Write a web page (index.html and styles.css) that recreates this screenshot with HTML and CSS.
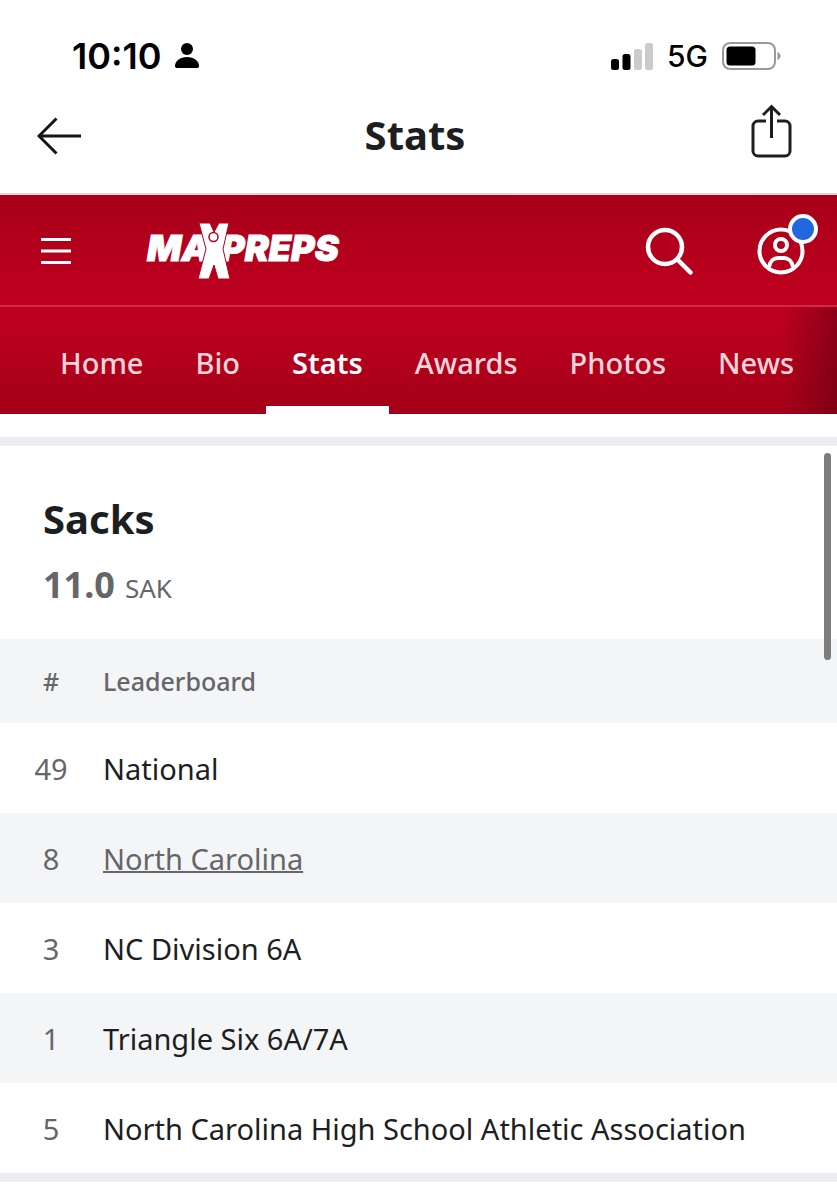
FILE: index.html
```html
<!DOCTYPE html>
<html lang="en">
<head>
<meta charset="utf-8">
<meta name="viewport" content="width=device-width, initial-scale=1">
<title>Stats</title>
<link rel="stylesheet" href="styles.css">
</head>
<body>
<div class="status">
  <div class="status-left">
    <span class="clock">10:10</span>
    <svg width="24" height="28" viewBox="0 0 24 28" aria-hidden="true"><circle cx="12" cy="7" r="6"/><path d="M12 15c7 0 12 4 12 9 0 1.500-.8 2-2.500 2h-19C.8 26 0 25.500 0 24c0-5 5-9 12-9z"/></svg>
  </div>
  <div class="status-right">
    <svg width="42" height="27" viewBox="0 0 42 27" aria-hidden="true"><rect y="16" width="8" height="11" rx="2.500"/><rect x="11.500" y="11" width="8" height="16" rx="2.500"/><g fill="#cbcbcb"><rect x="23" y="6" width="8" height="21" rx="2.500"/><rect x="34" width="8" height="27" rx="2.500"/></g></svg>
    <span class="network">5G</span>
    <svg width="60" height="28" viewBox="0 0 60 28" aria-hidden="true"><rect x="1" y="1" width="52" height="26" rx="7" fill="none" stroke="#999" stroke-width="2"/><rect x="4.500" y="4.500" width="29" height="19" rx="3.500"/><path d="M55.500 10c4 1.500 4 6.500 0 8z" fill="#999"/></svg>
  </div>
</div>
<header class="titlebar">
  <button class="icon-button" aria-label="Back"><svg width="44" height="38" viewBox="0 0 44 38" fill="none" stroke="#151515" stroke-width="3"><path d="M19.500 1.500 2 19l17.500 17.500M2 19h42"/></svg></button>
  <h1 class="title">Stats</h1>
  <button class="icon-button share" aria-label="Share"><svg width="42" height="54" viewBox="0 0 42 54" fill="none" stroke="#1d1e1f" stroke-width="3"><path d="M15 17H7a5 5 0 0 0-5 5v25a5 5 0 0 0 5 5h27a5 5 0 0 0 5-5V22a5 5 0 0 0-5-5h-8M20.500 34V3M12 11l8.500-8.500L29 11"/></svg></button>
</header>
<div class="brandbar">
  <button class="icon-button" aria-label="Menu"><svg width="30" height="28" viewBox="0 0 30 28" stroke="#fff" stroke-width="3"><path d="M0 2.500h30M0 14h30M0 25.500h30"/></svg></button>
  <a class="logo" href="#" aria-label="MaxPreps">
    <span class="wordmark">MA</span>
    <svg class="figure" width="32" height="56" viewBox="0 0 32 56" aria-hidden="true"><path fill="#fff" stroke="#b4001c" stroke-width="1" d="M1 0h11l4 9 5-9h10l-6 26 7 30H20l-4-14-5 14H0l8-30z"/><circle cx="15.500" cy="14" r="4.500" fill="#fff" stroke="#b4001c" stroke-width="1.500"/></svg>
    <span class="wordmark">PREPS</span>
  </a>
  <button class="icon-button" aria-label="Search"><svg width="48" height="48" viewBox="0 0 48 48" fill="none" stroke="#fff" stroke-width="4.500" stroke-linecap="round"><circle cx="20" cy="20" r="17"/><path d="m32.500 32.500 13 13"/></svg></button>
  <button class="icon-button account" aria-label="Account"><svg width="48" height="48" viewBox="0 0 48 48" fill="none" stroke="#fff" stroke-width="4"><circle cx="24" cy="24" r="21.500"/><circle cx="24" cy="18" r="6"/><path d="M12 40c1-6 5-9 9-9h6c4 0 8 3 9 9"/></svg><span class="badge"></span></button>
</div>
<nav class="tabs" aria-label="Athlete">
  <a class="tab" href="#">Home</a>
  <a class="tab" href="#">Bio</a>
  <a class="tab active" href="#" aria-current="page">Stats</a>
  <a class="tab" href="#">Awards</a>
  <a class="tab" href="#">Photos</a>
  <a class="tab" href="#">News</a>
</nav>
<main class="content">
  <div class="scrollbar"></div>
  <section class="stat">
    <h2 class="stat-name">Sacks</h2>
    <p class="stat-value"><strong class="number">11.0</strong><span>SAK</span></p>
  </section>
  <table class="board">
    <thead><tr><th class="rank" scope="col">#</th><th scope="col">Leaderboard</th></tr></thead>
    <tbody>
      <tr><td class="rank">49</td><td>National</td></tr>
      <tr><td class="rank">8</td><td><a class="link" href="#">North Carolina</a></td></tr>
      <tr><td class="rank">3</td><td>NC Division 6A</td></tr>
      <tr><td class="rank">1</td><td>Triangle Six 6A/7A</td></tr>
      <tr><td class="rank">5</td><td>North Carolina High School Athletic Association</td></tr>
    </tbody>
  </table>
</main>
</body>
</html>
```
FILE: styles.css
```css
* { box-sizing: border-box; }
body {
  margin: 0;
  background: #fff;
  color: #1d1e1f;
  font-family: "Noto Sans", "Open Sans", sans-serif;
}
h1, h2, p { margin: 0; }
svg { display: block; flex: none; }
.icon-button {
  display: block;
  padding: 0;
  border: 0;
  background: none;
}
.status {
  display: flex;
  justify-content: space-between;
  align-items: center;
  padding: 32px 55px 0 72px;
  font-family: Inter, sans-serif;
  color: #000;
}
.status-left, .status-right {
  display: flex;
  align-items: center;
  gap: 14px;
  height: 48px;
}
.clock { font-size: 36px; font-weight: 600; }
.network { font-size: 30px; font-weight: 500; }
.titlebar {
  display: grid;
  grid-template-columns: 1fr auto 1fr;
  align-items: center;
  height: 115px;
  padding: 0 44px 2px 37px;
  border-bottom: 2px solid #e2d5d9;
}
.share { justify-self: end; padding-bottom: 10px; }
.title { padding-bottom: 2px; font-size: 40px; font-weight: 700; line-height: 56px; }
.brandbar {
  display: flex;
  align-items: center;
  height: 112px;
  padding: 2px 32px 0 41px;
  background: linear-gradient(#a70019, #c00020);
  border-bottom: 2px solid #d02a45;
}
.logo {
  display: flex;
  align-items: center;
  margin: 0 auto 0 76px;
  color: #fff;
  text-decoration: none;
}
.wordmark {
  padding-bottom: 6px;
  font: italic 900 36px/40px Inter, sans-serif;
  -webkit-text-stroke: 1px #fff;
}
.figure { position: relative; margin: 0 -9px 0 -12px; }
.account { position: relative; margin-left: 64px; }
.badge {
  position: absolute;
  top: -13px;
  right: -13px;
  width: 30px;
  height: 30px;
  border: 4px solid #fff;
  border-radius: 50%;
  background: #2266e0;
}
.tabs {
  display: flex;
  height: 107px;
  padding-left: 34px;
  overflow: hidden;
  background:
    linear-gradient(to right, transparent calc(100% - 56px), rgba(90, 0, 15, 0.5)),
    linear-gradient(#c00020, #a40018);
}
.tab {
  padding: 36px 26px 0;
  border-bottom: 8px solid transparent;
  color: #ffd4da;
  font-size: 29px;
  font-weight: 500;
  line-height: 40px;
  text-decoration: none;
}
.active { border-bottom-color: #fff; color: #fff; font-weight: 600; }
.content {
  position: relative;
  margin-top: 23px;
  border-top: 9px solid #ebedf0;
  border-bottom: 9px solid #ebedf0;
}
.scrollbar {
  position: absolute;
  top: 7px;
  right: 6px;
  width: 7px;
  height: 207px;
  border-radius: 4px;
  background: #7c7c7d;
}
.stat { padding: 43px 43px 23px; }
.stat-name { font-size: 40px; font-weight: 700; line-height: 60px; }
.stat-value {
  display: flex;
  align-items: baseline;
  gap: 10px;
  padding-top: 8px;
  color: #656667;
  font-size: 26px;
  line-height: 56px;
}
.number { font-size: 36px; font-weight: 700; }
.board { width: 100%; border-collapse: collapse; text-align: left; }
.board th {
  height: 84px;
  padding: 0;
  background: #f4f5f7;
  color: #656667;
  font-size: 25px;
  font-weight: 500;
}
.board td { height: 90px; padding: 0; font-size: 29px; }
.board tr:nth-child(even) td { background: #f4f5f7; }
.board .rank { width: 103px; padding-right: 1px; text-align: center; color: #656667; }
.link { color: #656667; text-decoration-thickness: 2px; }
```
